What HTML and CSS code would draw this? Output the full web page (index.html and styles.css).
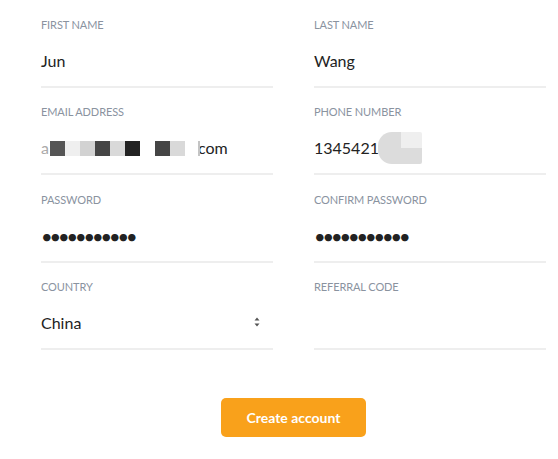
FILE: index.html
```html
<!DOCTYPE html>
<html>
<head>
<meta charset="utf-8">
<link rel="stylesheet" href="styles.css">
</head>
<body>
<form class="signup">
  <div class="grid">
    <div class="field">
      <div class="label">First name</div>
      <div class="value">Jun</div>
    </div>
    <div class="field">
      <div class="label">Last name</div>
      <div class="value">Wang</div>
    </div>
    <div class="field">
      <div class="label">Email address</div>
      <div class="value email"><span class="faded">a</span><span class="mosaic">
        <i class="px c1"></i><i class="px c2"></i><i class="px c3"></i><i class="px c4"></i><i class="px c5"></i><i class="px c6"></i><i class="px c7"></i><i class="px c4"></i><i class="px c5"></i></span><i class="edge"></i>com</div>
    </div>
    <div class="field">
      <div class="label">Phone number</div>
      <div class="value phone">1345421<i class="blur"></i></div>
    </div>
    <div class="field">
      <div class="label">Password</div>
      <div class="value dots">•••••••••••</div>
    </div>
    <div class="field">
      <div class="label">Confirm password</div>
      <div class="value dots">•••••••••••</div>
    </div>
    <div class="field">
      <div class="label">Country</div>
      <div class="value select">China
        <svg class="arrows" width="6" height="10" viewBox="0 0 6 10"><path d="M3 0.5 L5.5 3.5 H0.5 Z M3 9.5 L5.5 6.5 H0.5 Z" fill="#555"/></svg>
      </div>
    </div>
    <div class="field">
      <div class="label">Referral code</div>
      <div class="value"></div>
    </div>
  </div>
  <div class="actions">
    <button type="button" class="btn">Create account</button>
  </div>
</form>
</body>
</html>
```

FILE: styles.css
```css
html, body {
  margin: 0;
  padding: 0;
  background: #fff;
}
body {
  font-family: Lato, "Open Sans", sans-serif;
  color: #222;
}
.signup {
  width: 505px;
  padding-left: 41px;
}
.grid {
  display: grid;
  grid-template-columns: 232px 232px;
  column-gap: 41px;
}
.field {
  padding-top: 17.5px;
  padding-bottom: 15px;
  border-bottom: 2px solid #eeeeee;
  height: 53px;
  display: flex;
  flex-direction: column;
  gap: 19px;
}
.label {
  font-size: 11px;
  line-height: 14px;
  text-transform: uppercase;
  color: #8a939f;
  letter-spacing: -0.1px;
}
.value {
  font-size: 16px;
  line-height: 20px;
  height: 20px;
  color: #222;
  display: flex;
  align-items: center;
  white-space: nowrap;
}
.faded {
  color: #aaa;
}
.mosaic {
  display: inline-flex;
  margin-left: 1px;
}
.px {
  display: block;
  width: 15px;
  height: 15px;
}
.c1 { background: #555; }
.c2 { background: #efefef; }
.c3 { background: #d2d2d2; }
.c4 { background: #454545; }
.c5 { background: #d9d9d9; }
.c6 { background: #222; }
.c7 { background: #fff; }
.edge {
  display: block;
  width: 2px;
  height: 15px;
  margin-left: 13px;
  background: #c4c4c4;
  margin-right: -2px;
  position: relative;
  z-index: 1;
}
.blur {
  display: block;
  width: 44px;
  height: 32px;
  margin-left: -1px;
  border-radius: 14px 2px 2px 14px;
  background:
    linear-gradient(to bottom, #efefef 0 50%, transparent 50%) right top / 21px 100% no-repeat,
    #dcdcdc;
}
.dots {
  font-size: 20px;
  letter-spacing: -3.1px;
  color: #222;
}
.select {
  justify-content: space-between;
  padding-right: 13px;
}
.arrows {
  margin-top: -2px;
}
.actions {
  display: flex;
  justify-content: center;
  padding-top: 48px;
}
.btn {
  width: 145px;
  height: 39px;
  border: none;
  border-radius: 5px;
  background: #f9a11b;
  color: #fff;
  font-family: Lato, sans-serif;
  font-weight: 700;
  font-size: 14px;
  padding: 0;
}
```
